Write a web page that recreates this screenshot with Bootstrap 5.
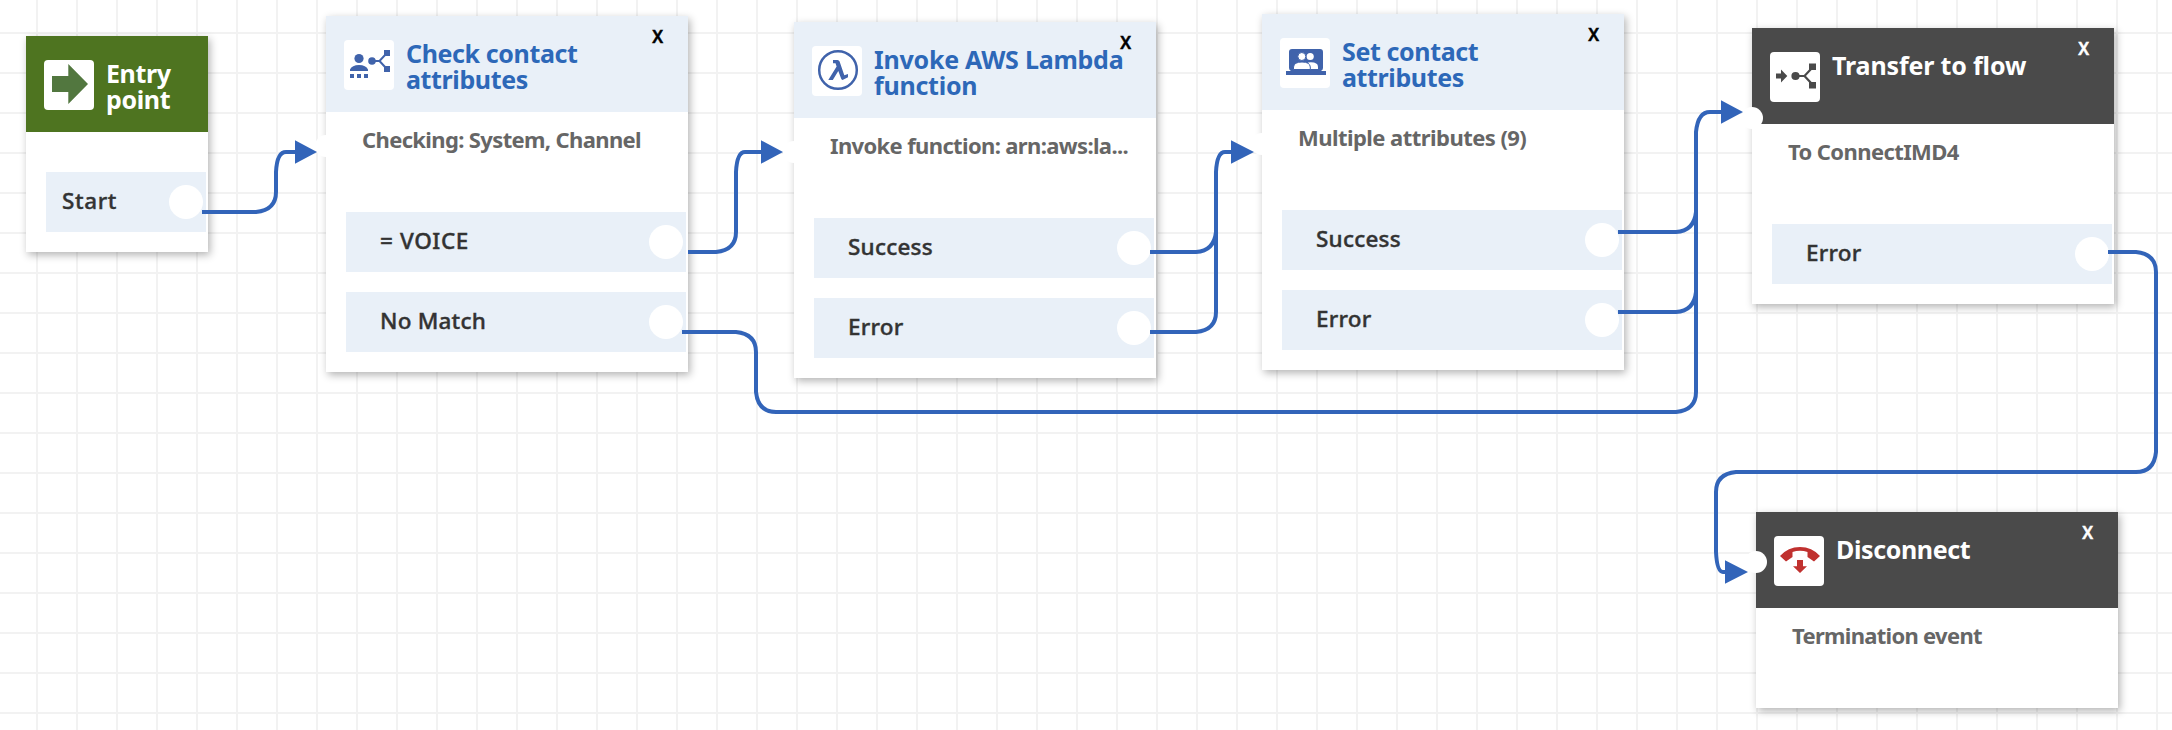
<!DOCTYPE html>
<html lang="en">
<head>
<meta charset="utf-8">
<meta name="viewport" content="width=device-width, initial-scale=1">
<title>Contact flow</title>
<link rel="stylesheet" href="https://cdn.jsdelivr.net/npm/bootstrap@5.3.0/dist/css/bootstrap.min.css">
<style>
body { font-family: "Noto Sans", "Open Sans", sans-serif; }
.flow-canvas {
  width: 2172px; height: 730px;
  background:
    linear-gradient(90deg, #f2f2f2 2px, transparent 2px) 36px 0 / 40px 40px,
    linear-gradient(#f2f2f2 2px, transparent 2px) 0 32px / 40px 40px, #fff;
}
.flow-block { width: 362px; box-shadow: 2px 3px 8px rgba(0,0,0,.3); }
.flow-block .block-head { height: 96px; padding: 24px 18px; gap: 12px; background: #e9f0f8; color: #2d68b8; }
.block-icon { width: 50px; height: 50px; border-radius: 4px; background: #fff; }
.block-title { font-size: 25px; line-height: 26px; font-weight: 700; letter-spacing: -.38px; }
.block-close { right: 25px; top: 9px; font-size: 17px; line-height: 23px; font-weight: 600; color: #000; -webkit-text-stroke: .5px currentColor; }
.block-note { height: 100px; padding: 12px 32px 0 36px; font-size: 22px; line-height: 30px; font-weight: 700; letter-spacing: -.64px; color: #666; white-space: nowrap; }
.branches { gap: 20px; padding: 0 2px 20px 20px; }
.branch { height: 60px; padding: 0 3px 0 34px; background: #e9f0f8; color: #333; font-size: 22.5px; font-weight: 500; letter-spacing: .2px; -webkit-text-stroke: .4px #333; }
.branch > span { padding-bottom: 2.5px; }
.branch.open-text { letter-spacing: .6px; }
.out-port { width: 34px; height: 34px; }
.in-port { width: 22px; height: 22px; left: -11px; }
.entry { width: 182px; left: 26px; top: 36px; }
.entry .block-head { background: #4e7420; color: #fff; }
.entry .branches { padding-top: 40px; }
.entry .branch { padding-left: 16px; }
.check { left: 326px; top: 16px; }
.check .in-port { top: 119px; }
.lambda { left: 794px; top: 22px; }
.lambda .in-port { top: 119px; }
.lambda .block-title { letter-spacing: -.24px; }
.setattr { left: 1262px; top: 14px; }
.setattr .in-port { top: 119px; }
.setattr .block-note { letter-spacing: -.55px; }
.transfer { left: 1752px; top: 28px; }
.transfer .in-port { top: 79px; }
.transfer .block-title { letter-spacing: -.15px; }
.transfer .block-note { letter-spacing: -.6px; }
.disconnect { left: 1756px; top: 512px; }
.disconnect .in-port { top: 39px; }
.disconnect .block-note { letter-spacing: -.7px; }
.flow-block.terminal .block-head { background: #4a4a4a; color: #fff; }
.terminal .block-close { color: #fff; }
.wires { pointer-events: none; }
</style>
</head>
<body>
<main class="flow-canvas position-relative overflow-hidden">

  <section class="flow-block entry position-absolute bg-white">
    <header class="block-head d-flex">
      <svg class="block-icon flex-shrink-0" viewBox="0 0 50 50"><path fill="#52773f" d="M8 16H24.3V4L44 24 24.3 44V32H8Z"/></svg>
      <div class="block-title">Entry<br>point</div>
    </header>
    <div class="branches d-flex flex-column">
      <div class="branch open-text d-flex align-items-center justify-content-between"><span>Start</span><i class="out-port rounded-circle bg-white"></i></div>
    </div>
  </section>

  <section class="flow-block check position-absolute bg-white">
    <i class="in-port position-absolute rounded-circle bg-white"></i>
    <header class="block-head d-flex">
      <svg class="block-icon flex-shrink-0" viewBox="0 0 50 50" fill="#4063ab"><circle cx="15" cy="18.5" r="4.6"/><path d="M6 31V29.5Q8 25 15 25T24 29.5V31ZM6 34h4v4H6ZM13 34h4v4h-4ZM20 34h4v4h-4ZM40 10h6v6h-6ZM40 26h6v6h-6Z"/><circle cx="28" cy="21" r="3.8"/><path d="M28 21H35.5L42 14M35.5 21L42 28" fill="none" stroke="#4063ab" stroke-width="2"/></svg>
      <div class="block-title">Check contact<br>attributes</div>
    </header>
    <span class="block-close position-absolute">X</span>
    <div class="block-note">Checking: System, Channel</div>
    <div class="branches d-flex flex-column">
      <div class="branch open-text d-flex align-items-center justify-content-between"><span>= VOICE</span><i class="out-port rounded-circle bg-white"></i></div>
      <div class="branch d-flex align-items-center justify-content-between"><span>No Match</span><i class="out-port rounded-circle bg-white"></i></div>
    </div>
  </section>

  <section class="flow-block lambda position-absolute bg-white">
    <i class="in-port position-absolute rounded-circle bg-white"></i>
    <header class="block-head d-flex">
      <svg class="block-icon flex-shrink-0" viewBox="0 0 50 50"><circle cx="26" cy="24" r="18.8" fill="none" stroke="#4063ab" stroke-width="2.5"/><path fill="#4063ab" d="M21 14H25.5Q27 14 27.6 15.6L32.3 29.3 36 28V31.3L31 33.8Q29.8 34.3 29.1 32.5L26.3 25 20.8 34H16.3L24.6 20.5 23.5 17.3H21Z"/></svg>
      <div class="block-title">Invoke AWS Lambda<br>function</div>
    </header>
    <span class="block-close position-absolute">X</span>
    <div class="block-note">Invoke function: arn:aws:la...</div>
    <div class="branches d-flex flex-column">
      <div class="branch d-flex align-items-center justify-content-between"><span>Success</span><i class="out-port rounded-circle bg-white"></i></div>
      <div class="branch d-flex align-items-center justify-content-between"><span>Error</span><i class="out-port rounded-circle bg-white"></i></div>
    </div>
  </section>

  <section class="flow-block setattr position-absolute bg-white">
    <i class="in-port position-absolute rounded-circle bg-white"></i>
    <header class="block-head d-flex">
      <svg class="block-icon flex-shrink-0" viewBox="0 0 50 50"><path fill="#4063ab" d="M12 11H40Q43 11 43 14V30Q43 32 41 33H46V37H6V33H11Q9 32 9 30V14Q9 11 12 11Z"/><g fill="#fff"><circle cx="30.2" cy="18.5" r="3.6"/><path d="M28 24.5Q38 23.5 38 29V31H30Z"/><circle cx="21.8" cy="18.5" r="4" stroke="#4063ab"/><path stroke="#4063ab" d="M13.5 31.5V29Q14 24 22 24T30.3 29V31.5Z"/></g></svg>
      <div class="block-title">Set contact<br>attributes</div>
    </header>
    <span class="block-close position-absolute">X</span>
    <div class="block-note">Multiple attributes (9)</div>
    <div class="branches d-flex flex-column">
      <div class="branch d-flex align-items-center justify-content-between"><span>Success</span><i class="out-port rounded-circle bg-white"></i></div>
      <div class="branch d-flex align-items-center justify-content-between"><span>Error</span><i class="out-port rounded-circle bg-white"></i></div>
    </div>
  </section>

  <section class="flow-block transfer terminal position-absolute bg-white">
    <header class="block-head d-flex">
      <svg class="block-icon flex-shrink-0" viewBox="0 0 50 50" fill="#4a4a4a"><path d="M6 21.5H11V17.5L17.3 24 11 30.5V26.5H6ZM39 11.5h7V18h-7ZM39 30h7v6.5h-7Z"/><circle cx="25.5" cy="24" r="4.1"/><path d="M25.5 24H34.5L42 16M34.5 24L42 32" fill="none" stroke="#4a4a4a" stroke-width="2.2"/></svg>
      <div class="block-title">Transfer to flow</div>
    </header>
    <i class="in-port position-absolute rounded-circle bg-white"></i>
    <span class="block-close position-absolute">X</span>
    <div class="block-note">To ConnectIMD4</div>
    <div class="branches d-flex flex-column">
      <div class="branch d-flex align-items-center justify-content-between"><span>Error</span><i class="out-port rounded-circle bg-white"></i></div>
    </div>
  </section>

  <section class="flow-block disconnect terminal position-absolute bg-white">
    <header class="block-head d-flex">
      <svg class="block-icon flex-shrink-0" viewBox="0 0 50 50" fill="#c0312f"><path d="M6 20Q14 11 26 11T46 20L40 25.5 33.5 21V16Q26 13.3 18.5 16V21L12 25.5ZM23 24h6v6.3h4L26 37 19 30.3h4Z"/></svg>
      <div class="block-title">Disconnect</div>
    </header>
    <i class="in-port position-absolute rounded-circle bg-white"></i>
    <span class="block-close position-absolute">X</span>
    <div class="block-note">Termination event</div>
  </section>

  <!-- connections between ports -->
  <svg class="wires position-absolute top-0 start-0" width="2172" height="730" viewBox="0 0 2172 730">
    <g fill="none" stroke="#3264b9" stroke-width="4">
      <path d="M202 212H256Q276 210 276 192V172Q277 152 286 152H297"/>
      <path d="M688 252H716Q736 250 736 232V172Q737 152 745 152H764"/>
      <path d="M682 332H736Q756 334 756 352V392Q758 412 776 412H1676Q1696 410 1696 392V132Q1698 112 1710 112H1724"/>
      <path d="M1150 252H1196Q1214 251 1216 232M1150 332H1196Q1216 330 1216 312V172Q1217 152 1225 152H1234"/>
      <path d="M1618 232H1676Q1694 231 1696 212M1618 312H1676Q1694 311 1696 292"/>
      <path d="M2108 252H2136Q2156 254 2156 272V452Q2154 472 2136 472H1736Q1716 474 1716 492V552Q1717 572 1723 572H1728"/>
    </g>
    <path fill="#3264b9" d="M295 140.300 317 152 295 163.700ZM761 140.300 783 152 761 163.700ZM1231 140.300 1254 152 1231 163.700ZM1721 100.300 1743 112 1721 123.700ZM1725 560.300 1748 572 1725 583.700Z"/>
  </svg>
</main>
<script src="https://cdn.jsdelivr.net/npm/bootstrap@5.3.0/dist/js/bootstrap.bundle.min.js"></script>
</body>
</html>
